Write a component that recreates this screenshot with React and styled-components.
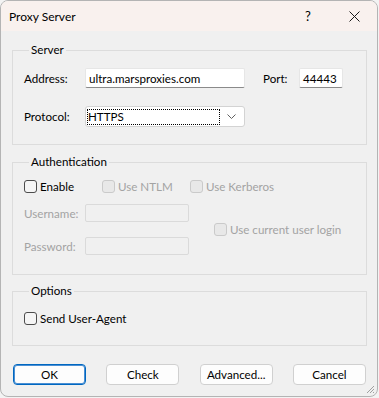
import styled, { createGlobalStyle } from "styled-components";

const Global = createGlobalStyle`
  html, body {
    margin: 0;
    padding: 0;
    background: #f3f3f3;
  }
  * { box-sizing: border-box; }
`;

const Window = styled.div`
  position: relative;
  width: 378px;
  height: 397px;
  background: #f0f0f0;
  border: 1px solid #b4b4b4;
  border-radius: 8px;
  overflow: hidden;
  font-family: Lato, "Noto Sans", sans-serif;
  font-size: 11.6px;
  color: #000;
`;

const TitleBar = styled.div`
  height: 30px;
  background: #f9f1ee;
  display: flex;
  align-items: center;
  padding-left: 8px;
`;

const Title = styled.div`
  flex: 1;
  font-size: 12px;
`;

const TitleButton = styled.div`
  width: 46px;
  height: 30px;
  display: flex;
  align-items: center;
  justify-content: center;
  font-size: 13px;
`;

const Body = styled.div`
  padding: 11px 10px 0 11px;
`;

const Group = styled.fieldset`
  margin: ${(p) => p.$top || 0}px 0 0 0;
  padding: ${(p) => p.$pad};
  border: 1px solid #dcdcdc;
  min-width: 0;
`;

const Legend = styled.legend`
  margin-left: 5px;
  padding: 0 2px;
  line-height: 16px;
  height: 16px;
`;

const Row = styled.div`
  display: flex;
  align-items: center;
  height: ${(p) => p.$h || 20}px;
  margin-top: ${(p) => p.$mt || 0}px;
`;

const Label = styled.span`
  width: ${(p) => p.$w || 61}px;
  flex: none;
  white-space: nowrap;
  color: ${(p) => (p.$disabled ? "#a3a3a3" : "#000")};
`;

const Input = styled.div`
  width: ${(p) => p.$w}px;
  height: ${(p) => p.$h || 20}px;
  flex: none;
  background: ${(p) => (p.$disabled ? "#f0f0f0" : "#fff")};
  border: 1px solid ${(p) => (p.$disabled ? "#dadada" : "#e6e6e6")};
  border-bottom-color: ${(p) => (p.$disabled ? "#dadada" : "#8a8a8a")};
  border-radius: 2px;
  padding-left: 3px;
  display: flex;
  align-items: center;
`;

const Select = styled.div`
  width: 160px;
  height: 21px;
  flex: none;
  background: #fff;
  border: 1px solid #d3d3d3;
  border-radius: 3px;
  display: flex;
  align-items: center;
  padding: 0 4px 0 1px;
`;

const FocusText = styled.div`
  flex: 1;
  height: 16px;
  outline: 1px dotted #000;
  outline-offset: -1px;
  padding-left: 1px;
  display: flex;
  align-items: center;
`;

const Chevron = styled.div`
  width: 18px;
  display: flex;
  justify-content: center;
  margin-left: 2px;
`;

const Check = styled.label`
  display: flex;
  align-items: center;
  gap: 3px;
  white-space: nowrap;
  width: ${(p) => (p.$w ? `${p.$w}px` : "auto")};
  margin-left: ${(p) => p.$ml || 0}px;
  color: ${(p) => (p.$disabled ? "#a3a3a3" : "#000")};
`;

const Box = styled.span`
  width: 13px;
  height: 13px;
  flex: none;
  border-radius: 3px;
  border: 1px solid ${(p) => (p.$disabled ? "#cacaca" : "#4c4c4c")};
  background: ${(p) => (p.$disabled ? "#e8e8e8" : "#f5f5f5")};
`;

const AuthGrid = styled.div`
  display: flex;
  align-items: center;
  margin-top: 10px;
`;

const AuthFields = styled.div`
  display: flex;
  flex-direction: column;
  gap: 15px;
`;

const Buttons = styled.div`
  display: flex;
  justify-content: space-between;
  margin-top: 18px;
  padding: 0 0 0 1px;
  width: 354px;
`;

const Button = styled.button`
  width: 73px;
  height: 21px;
  padding: 0;
  font-family: inherit;
  font-size: 11.6px;
  color: #000;
  background: #fdfdfd;
  border: 1px solid ${(p) => (p.$default ? "#0067c0" : "#d0d0d0")};
  box-shadow: ${(p) => (p.$default ? "inset 0 0 0 1px #4a8fd4" : "none")};
  border-radius: 4px;
`;

const Grip = styled.svg`
  position: absolute;
  right: 2px;
  bottom: 2px;
`;

export default function App() {
  return (
    <>
      <Global />
      <Window>
        <TitleBar>
          <Title>Proxy Server</Title>
          <TitleButton>?</TitleButton>
          <TitleButton>
            <svg width="11" height="11" viewBox="0 0 11 11">
              <path d="M0.5 0.5 L10.5 10.5 M10.5 0.5 L0.5 10.5" stroke="#1a1a1a" strokeWidth="1" />
            </svg>
          </TitleButton>
        </TitleBar>
        <Body>
          <Group $pad="10px 11px 17px 11px">
            <Legend>Server</Legend>
            <Row>
              <Label>Address:</Label>
              <Input $w={160}>ultra.marsproxies.com</Input>
              <Label $w={36} style={{ marginLeft: 18 }}>Port:</Label>
              <Input $w={44}>44443</Input>
            </Row>
            <Row $mt={18} $h={21}>
              <Label>Protocol:</Label>
              <Select>
                <FocusText>HTTPS</FocusText>
                <Chevron>
                  <svg width="9" height="5" viewBox="0 0 9 5">
                    <path d="M0.5 0.5 L4.5 4.5 L8.5 0.5" fill="none" stroke="#606060" strokeWidth="1" />
                  </svg>
                </Chevron>
              </Select>
            </Row>
          </Group>

          <Group $top={9} $pad="8px 11px 19px 11px">
            <Legend>Authentication</Legend>
            <Row $h={16}>
              <Check $w={78}>
                <Box />
                Enable
              </Check>
              <Check $disabled $w={88}>
                <Box $disabled />
                Use NTLM
              </Check>
              <Check $disabled>
                <Box $disabled />
                Use Kerberos
              </Check>
            </Row>
            <AuthGrid>
              <AuthFields>
                <Row $h={18}>
                  <Label $disabled>Username:</Label>
                  <Input $w={104} $h={18} $disabled />
                </Row>
                <Row $h={18}>
                  <Label $disabled>Password:</Label>
                  <Input $w={104} $h={18} $disabled />
                </Row>
              </AuthFields>
              <Check $disabled $ml={25}>
                <Box $disabled />
                Use current user login
              </Check>
            </AuthGrid>
          </Group>

          <Group $top={8} $pad="11px 11px 19px 11px">
            <Legend>Options</Legend>
            <Row $h={16}>
              <Check>
                <Box />
                Send User-Agent
              </Check>
            </Row>
          </Group>

          <Buttons>
            <Button $default>OK</Button>
            <Button>Check</Button>
            <Button>Advanced...</Button>
            <Button>Cancel</Button>
          </Buttons>
        </Body>
        <Grip width="10" height="10" viewBox="0 0 10 10">
          <path d="M9 2 L2 9 M9 5 L5 9 M9 8 L8 9" stroke="#a0a0a0" strokeWidth="1" />
        </Grip>
      </Window>
    </>
  );
}
